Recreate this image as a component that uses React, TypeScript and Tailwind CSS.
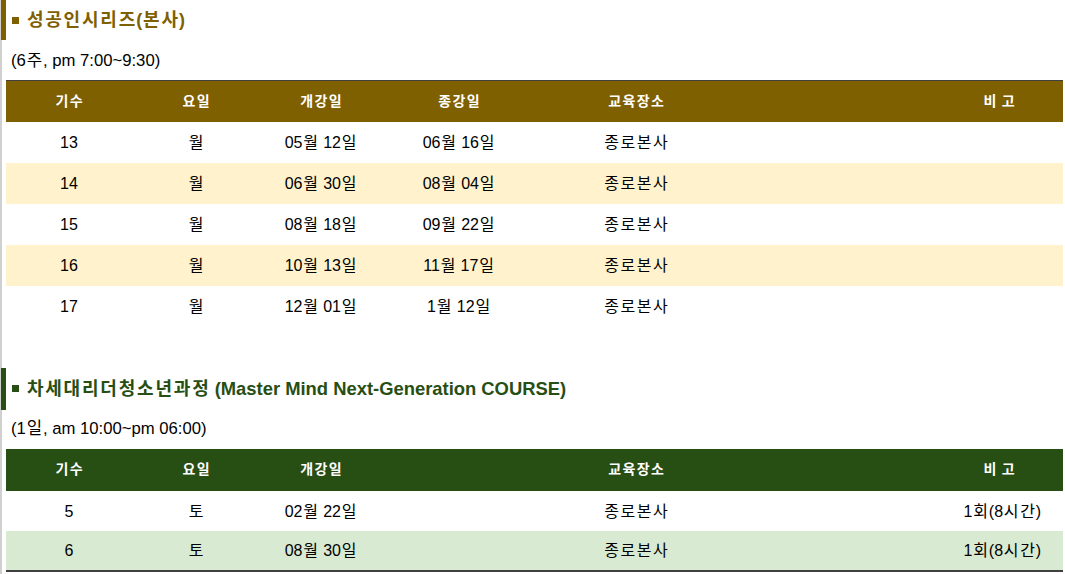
import React from 'react';

const font = "font-['Liberation_Sans','Noto_Sans_CJK_KR',sans-serif]";

// Hangul runs are a bit narrower in the local CJK font than in the reference, so space them out evenly
function Ko({ text }: { text: string }) {
  const parts = text.split(/([\uac00-\ud7a3]+)/).filter(Boolean);
  return (
    <>
      {parts.map((p, i) =>
        /[\uac00-\ud7a3]/.test(p) ? (
          <span key={i} className="tracking-[0.1em] pl-[0.05em] -mr-[0.05em]">{p}</span>
        ) : (
          <React.Fragment key={i}>{p}</React.Fragment>
        )
      )}
    </>
  );
}

const series = [
  { no: '13', day: '월', start: '05월 12일', end: '06월 16일', place: '종로본사' },
  { no: '14', day: '월', start: '06월 30일', end: '08월 04일', place: '종로본사' },
  { no: '15', day: '월', start: '08월 18일', end: '09월 22일', place: '종로본사' },
  { no: '16', day: '월', start: '10월 13일', end: '11월 17일', place: '종로본사' },
  { no: '17', day: '월', start: '12월 01일', end: '1월 12일', place: '종로본사' },
];

const youth = [
  { no: '5', day: '토', start: '02월 22일', place: '종로본사', note: '1회(8시간)' },
  { no: '6', day: '토', start: '08월 30일', place: '종로본사', note: '1회(8시간)' },
];

function Cols() {
  return (
    <colgroup>
      <col className="w-[126px]" />
      <col className="w-[128px]" />
      <col className="w-[122px]" />
      <col className="w-[154px]" />
      <col className="w-[200px]" />
      <col className="w-[199px]" />
      <col className="w-[128px]" />
    </colgroup>
  );
}

export default function App() {
  return (
    <div className={`${font} min-h-screen bg-white text-black border-l-2 border-[#d0d0d0] pr-[2px]`}>
      {/* 성공인시리즈 */}
      <h2 className="h-[40px] -ml-[1px] border-l-[5px] border-[#7f6000] flex items-center gap-[7px] pl-[6px] text-[18px] font-bold text-[#7f6000]">
        <span className="inline-block w-[7px] h-[7px] bg-[#7f6000]" />
        <span><Ko text="성공인시리즈(본사)" /></span>
      </h2>
      <p className="h-[40px] pt-[1px] flex items-center pl-[9px] text-[16.7px]">
        <span><Ko text="(6주, pm 7:00~9:30)" /></span>
      </p>
      <div className="pl-[4px]">
        <table className="w-full table-fixed border-collapse text-center border-t border-[#404040]">
          <Cols />
          <thead>
            <tr className="h-[41px] bg-[#7f6000] text-white text-[14px] font-bold">
              <th><Ko text="기수" /></th>
              <th><Ko text="요일" /></th>
              <th><Ko text="개강일" /></th>
              <th><Ko text="종강일" /></th>
              <th><Ko text="교육장소" /></th>
              <th></th>
              <th><Ko text="비 고" /></th>
            </tr>
          </thead>
          <tbody className="text-[16px]">
            {series.map((r, i) => (
              <tr key={r.no} className={`h-[41px] ${i % 2 === 1 ? 'bg-[#fff2cc]' : 'bg-white'}`}>
                <td className="pt-[2px]">{r.no}</td>
                <td className="pt-[2px]"><Ko text={r.day} /></td>
                <td className="pt-[2px]"><Ko text={r.start} /></td>
                <td className="pt-[2px]"><Ko text={r.end} /></td>
                <td className="pt-[2px]"><Ko text={r.place} /></td>
                <td></td>
                <td></td>
              </tr>
            ))}
          </tbody>
        </table>
      </div>

      {/* 차세대리더청소년과정 */}
      <h2 className="mt-[41px] h-[42px] -ml-[1px] border-l-[5px] border-[#274e13] flex items-center gap-[7px] pl-[6px] text-[18px] font-bold text-[#274e13]">
        <span className="inline-block w-[7px] h-[7px] bg-[#274e13]" />
        <span>
          <Ko text="차세대리더청소년과정" />{' '}
          <span className="text-[18.4px]">(Master Mind Next-Generation COURSE)</span>
        </span>
      </h2>
      <p className="h-[39px] flex items-center pl-[9px] text-[16.7px]">
        <span><Ko text="(1일, am 10:00~pm 06:00)" /></span>
      </p>
      <div className="pl-[4px]">
        <table className="w-full table-fixed border-collapse text-center border-b-2 border-[#404040]">
          <Cols />
          <thead>
            <tr className="h-[42px] bg-[#274e13] text-white text-[14px] font-bold">
              <th><Ko text="기수" /></th>
              <th><Ko text="요일" /></th>
              <th><Ko text="개강일" /></th>
              <th></th>
              <th><Ko text="교육장소" /></th>
              <th></th>
              <th><Ko text="비 고" /></th>
            </tr>
          </thead>
          <tbody className="text-[16px]">
            {youth.map((r, i) => (
              <tr key={r.no} className={`h-[40px] ${i % 2 === 1 ? 'bg-[#d9ead3]' : 'bg-white'}`}>
                <td className="pt-[2px]">{r.no}</td>
                <td className="pt-[2px]"><Ko text={r.day} /></td>
                <td className="pt-[2px]"><Ko text={r.start} /></td>
                <td></td>
                <td className="pt-[2px]"><Ko text={r.place} /></td>
                <td></td>
                <td className="pt-[2px] text-right pr-[22px]"><Ko text={r.note} /></td>
              </tr>
            ))}
          </tbody>
        </table>
      </div>
    </div>
  );
}
